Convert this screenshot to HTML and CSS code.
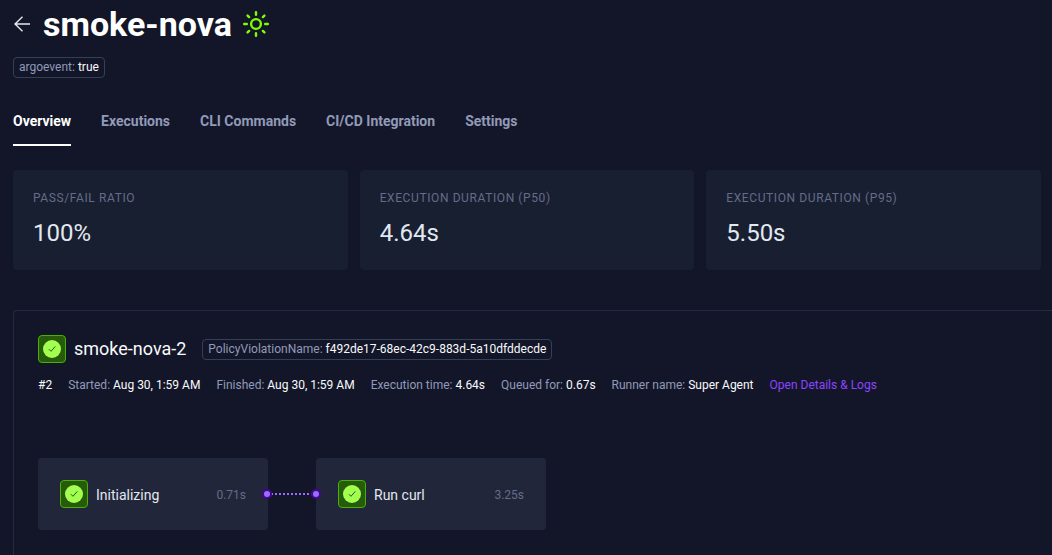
FILE: index.html
```html
<!DOCTYPE html>
<html lang="en">
<head>
<meta charset="utf-8">
<title>smoke-nova</title>
<link rel="stylesheet" href="styles.css">
</head>
<body>
<svg class="sprite" aria-hidden="true">
  <symbol id="passed" viewBox="0 0 18 18">
    <circle cx="9" cy="9" r="9" fill="#a3ff4f"/>
    <path d="M5.900 9.200 8 11.300 12.300 6.400" fill="none" stroke="#285a0b" stroke-width="1"/>
  </symbol>
</svg>
<main class="page">
  <header class="heading">
    <button class="back" type="button" aria-label="Back">
      <svg width="18" height="18" viewBox="0 0 18 18" fill="none" stroke="#e2e8f0" stroke-width="1.400"><path d="M17 9H2M9.500 1.800 2 9l7.500 7.200"/></svg>
    </button>
    <h1 class="title">smoke-nova</h1>
    <svg class="health" width="26" height="26" viewBox="0 0 26 26" fill="none" stroke="#7dff00" stroke-width="2.400" role="img" aria-label="Healthy">
      <circle cx="13" cy="13" r="4.900"/>
      <path stroke-linecap="round" d="M13 1.200v2.600M13 22.200v2.600M1.200 13h2.600M22.200 13h2.600M4.600 4.600l1.500 1.500M19.900 19.900l1.500 1.500M21.400 4.600l-1.500 1.500M6.100 19.900l-1.500 1.500"/>
    </svg>
  </header>
  <div class="labels"><span class="tag">argoevent: <b>true</b></span></div>

  <nav class="tabs">
    <a class="tab tab-active" href="#overview">Overview</a>
    <a class="tab" href="#executions">Executions</a>
    <a class="tab" href="#cli">CLI Commands</a>
    <a class="tab" href="#cicd">CI/CD Integration</a>
    <a class="tab" href="#settings">Settings</a>
  </nav>

  <section class="metrics">
    <div class="metric"><h2 class="metric-name">Pass/Fail Ratio</h2><p class="metric-value">100%</p></div>
    <div class="metric"><h2 class="metric-name">Execution Duration (P50)</h2><p class="metric-value">4.64s</p></div>
    <div class="metric"><h2 class="metric-name">Execution Duration (P95)</h2><p class="metric-value">5.50s</p></div>
  </section>

  <section class="execution">
    <div class="execution-head">
      <span class="status"><svg width="18" height="18"><use href="#passed"/></svg></span>
      <h2 class="execution-name">smoke-nova-2</h2>
      <span class="tag">PolicyViolationName: <b>f492de17-68ec-42c9-883d-5a10dfddecde</b></span>
    </div>
    <div class="details">
      <b>#2</b>
      <span>Started: <b>Aug 30, 1:59 AM</b></span>
      <span>Finished: <b>Aug 30, 1:59 AM</b></span>
      <span>Execution time: <b>4.64s</b></span>
      <span>Queued for: <b>0.67s</b></span>
      <span>Runner name: <b>Super Agent</b></span>
      <a class="details-link" href="#details">Open Details &amp; Logs</a>
    </div>
    <div class="flow">
      <div class="step">
        <span class="status"><svg width="18" height="18"><use href="#passed"/></svg></span>
        <span class="step-name">Initializing</span>
        <span class="step-time">0.71s</span>
      </div>
      <svg class="link" width="60" height="10" viewBox="0 0 60 10">
        <path d="M5 5H55" stroke="#9d6bff" stroke-width="2" stroke-dasharray="2 2"/>
        <circle cx="5" cy="5" r="4" fill="#9b6dff" stroke="#42068f" stroke-width="2"/>
        <circle cx="54" cy="5" r="4" fill="#9b6dff" stroke="#42068f" stroke-width="2"/>
      </svg>
      <div class="step">
        <span class="status"><svg width="18" height="18"><use href="#passed"/></svg></span>
        <span class="step-name">Run curl</span>
        <span class="step-time">3.25s</span>
      </div>
    </div>
  </section>
</main>
</body>
</html>
```
FILE: styles.css
```css
* { box-sizing: border-box; }
body {
  margin: 0;
  background: #131628;
  color: #f8fafc;
  font: 12px/20px Roboto, sans-serif;
  overflow: hidden;
}
h1, h2, p { margin: 0; font-weight: 400; }
b { font-weight: 400; color: #f8fafc; }
a { text-decoration: none; }
.sprite { display: none; }
.page { min-height: 100vh; padding: 4px 11px 0 13px; display: flex; flex-direction: column; }

.heading { display: flex; align-items: center; height: 40px; }
.back { display: flex; padding: 0; border: 0; background: none; margin-right: 12px; }
.title { font-size: 34px; line-height: 40px; font-weight: 700; color: #fff; margin-right: 11px; }
.labels { display: flex; margin-top: 13px; }
.tag {
  height: 21px;
  padding: 0 5px;
  border: 1px solid #334155;
  border-radius: 4px;
  line-height: 19px;
  color: #919ab8;
}

.tabs { display: flex; gap: 30px; margin-top: 33px; }
.tab { padding-bottom: 13px; border-bottom: 2px solid transparent; font-size: 14px; font-weight: 700; color: #919ab8; }
.tab-active { color: #fff; border-color: #fff; }

.metrics { display: grid; grid-template-columns: repeat(3, 1fr); gap: 12px; margin-top: 24px; }
.metric { padding: 18px 20px 20px; border-radius: 4px; background: #181f31; }
.metric-name { font-size: 12px; letter-spacing: 0.05em; text-transform: uppercase; color: #646c8a; }
.metric-value { margin-top: 8px; font-size: 24px; line-height: 34px; color: #e2e8f0; }

.execution {
  flex: 1;
  margin: 40px -11px 0 0;
  padding: 24px 24px 25px;
  border: solid #222b40;
  border-width: 1px 0 0 1px;
  border-top-left-radius: 4px;
}
.execution-head { display: flex; align-items: center; }
.execution-name { margin: 0 16px 0 8px; font-size: 18px; line-height: 28px; }
.status {
  display: flex;
  align-items: center;
  justify-content: center;
  width: 28px;
  height: 28px;
  border: 1px solid #45b300;
  border-radius: 4px;
  background: #285a0b;
}
.details { display: flex; gap: 16px; margin-top: 12px; color: #919ab8; }
.details-link { color: #8b45ff; }

.flow { display: flex; align-items: center; margin-top: 63px; }
.step {
  display: flex;
  align-items: center;
  width: 230px;
  height: 72px;
  padding: 0 22px;
  border-radius: 4px;
  background: #21263a;
}
.step-name { margin-left: 8px; font-size: 14px; line-height: 22px; padding-top: 2px; color: #e2e8f0; }
.step-time { margin-left: auto; padding-top: 2px; color: #646c8a; }
.link { position: relative; z-index: 1; margin: 0 -6px; }
```
